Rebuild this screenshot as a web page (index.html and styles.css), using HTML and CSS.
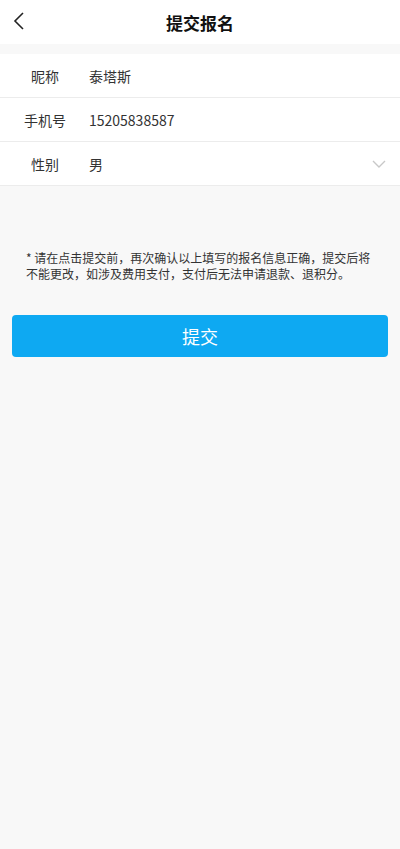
FILE: index.html
```html
<!DOCTYPE html>
<html lang="zh">
<head>
<meta charset="utf-8">
<title>提交报名</title>
<link rel="stylesheet" href="styles.css">
</head>
<body>
<div class="page">
  <header class="header">
    <svg class="back" width="12" height="18" viewBox="0 0 12 18"><path d="M10 1 L2 9 L10 17" fill="none" stroke="#222" stroke-width="1.6"/></svg>
    <h1 class="title">提交报名</h1>
  </header>
  <div class="form">
    <div class="row"><span class="label">昵称</span><span class="value">泰塔斯</span></div>
    <div class="row"><span class="label">手机号</span><span class="value">15205838587</span></div>
    <div class="row"><span class="label">性别</span><span class="value">男</span>
      <svg class="arrow" width="14" height="8" viewBox="0 0 14 8"><path d="M1 1 L7 7 L13 1" fill="none" stroke="#c8c8c8" stroke-width="1.4"/></svg>
    </div>
  </div>
  <p class="note">* 请在点击提交前，再次确认以上填写的报名信息正确，提交后将不能更改，如涉及费用支付，支付后无法申请退款、退积分。</p>
  <div class="btn-wrap"><button class="submit">提交</button></div>
</div>
</body>
</html>
```
FILE: styles.css
```css
html, body { margin: 0; padding: 0; }
body {
  background: #f8f8f8;
  font-family: "Noto Sans CJK SC", "Noto Sans", sans-serif;
  color: #333;
}
.page { min-height: 849px; }
.header {
  height: 44px;
  background: #fff;
  display: flex;
  align-items: center;
  justify-content: center;
  position: relative;
}
.back { position: absolute; left: 13px; top: 12px; }
.title { margin: 0; font-size: 17px; font-weight: bold; color: #111; }
.form { margin-top: 10px; background: #fff; }
.row {
  height: 43px;
  display: flex;
  align-items: center;
  border-bottom: 1px solid #ececec;
  position: relative;
}
.label { width: 90px; text-align: center; font-size: 14px; color: #333; }
.value { font-size: 14px; color: #333; margin-left: -1px; }
.arrow { position: absolute; right: 14px; top: 18px; }
.note {
  margin: 64px 26px 0 26px;
  font-size: 12px;
  line-height: 16px;
  color: #333;
}
.btn-wrap { padding: 33px 12px 0; }
.submit {
  width: 100%;
  height: 42px;
  border: none;
  border-radius: 4px;
  background: #0ea9f2;
  color: #fff;
  font-size: 18px;
  font-family: "Noto Sans CJK SC", sans-serif;
}
```
